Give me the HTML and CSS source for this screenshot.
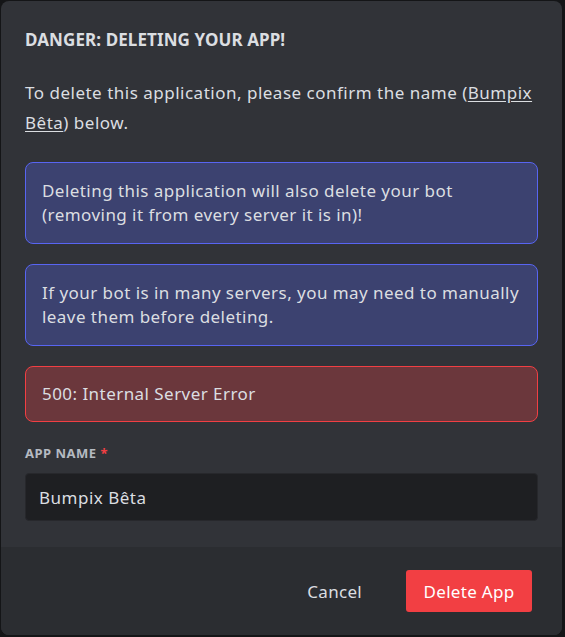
FILE: index.html
```html
<!DOCTYPE html>
<html>
<head>
<meta charset="utf-8">
<link rel="stylesheet" href="styles.css">
</head>
<body>
<div class="modal">
  <div class="content">
    <h1 class="title">DANGER: DELETING YOUR APP!</h1>
    <p class="desc">To delete this application, please confirm the name (<u>Bumpix<br>Bêta</u>) below.</p>
    <div class="notice info first">Deleting this application will also delete your bot<br>(removing it from every server it is in)!</div>
    <div class="notice info">If your bot is in many servers, you may need to manually<br>leave them before deleting.</div>
    <div class="notice error">500: Internal Server Error</div>
    <div class="label">APP NAME <span class="req">*</span></div>
    <div class="input">Bumpix Bêta</div>
  </div>
  <div class="footer">
    <button class="btn cancel">Cancel</button>
    <button class="btn danger">Delete App</button>
  </div>
</div>
</body>
</html>
```
FILE: styles.css
```css
html, body {
  margin: 0;
  padding: 0;
  background: #141517;
}
body {
  font-family: "Noto Sans", "Open Sans", sans-serif;
  color: #dbdee1;
  padding: 1px 0 0 1px;
}
.modal {
  width: 561px;
  height: 634px;
  background: #313338;
  border-radius: 8px;
  display: flex;
  flex-direction: column;
  overflow: hidden;
}
.content {
  flex: 1;
  padding: 29px 24px 0 24px;
  display: flex;
  flex-direction: column;
}
.title {
  margin: 0;
  font-size: 17px;
  line-height: 20px;
  font-weight: 700;
  letter-spacing: 0.1px;
  color: #dbdee1;
}
.desc {
  margin: 28px 0 0 0;
  font-size: 17px;
  letter-spacing: 0.5px;
  line-height: 30px;
  color: #dbdee1;
  white-space: nowrap;
}
.desc u {
  text-underline-offset: 2px;
}
.notice {
  border-radius: 8px;
  border: 1px solid;
  padding: 16px 16px;
  font-size: 17px;
  letter-spacing: 0.45px;
  line-height: 24px;
  color: #dbdee1;
  white-space: nowrap;
}
.info {
  margin-top: 20px;
  background: #3c4270;
  border-color: #5865f2;
}
.info.first {
  margin-top: 24px;
}
.error {
  margin-top: 20px;
  padding: 15px 16px;
  background: #6b373c;
  border-color: #f23f43;
}
.label {
  margin-top: 23px;
  font-size: 13px;
  line-height: 16px;
  font-weight: 700;
  color: #b5bac1;
  letter-spacing: 0.5px;
}
.req {
  color: #f23f43;
}
.input {
  margin-top: 12px;
  box-sizing: border-box;
  height: 48px;
  background: #1e1f22;
  border: 1px solid #27282c;
  border-radius: 4px;
  padding: 0 13px;
  display: flex;
  align-items: center;
  font-size: 17px;
  letter-spacing: 0.5px;
  color: #dbdee1;
}
.footer {
  height: 88px;
  background: #2b2d31;
  display: flex;
  align-items: center;
  justify-content: flex-end;
  padding: 0 30px 0 24px;
  gap: 26px;
}
.btn {
  font-family: "Noto Sans", "Open Sans", sans-serif;
  font-size: 17px;
  letter-spacing: 0.3px;
  border: none;
  border-radius: 3px;
  height: 42px;
  cursor: pointer;
}
.cancel {
  background: transparent;
  color: #dbdee1;
  padding: 0 18px;
}
.danger {
  background: #f23f43;
  color: #ffffff;
  width: 126px;
  padding: 0;
}
```
